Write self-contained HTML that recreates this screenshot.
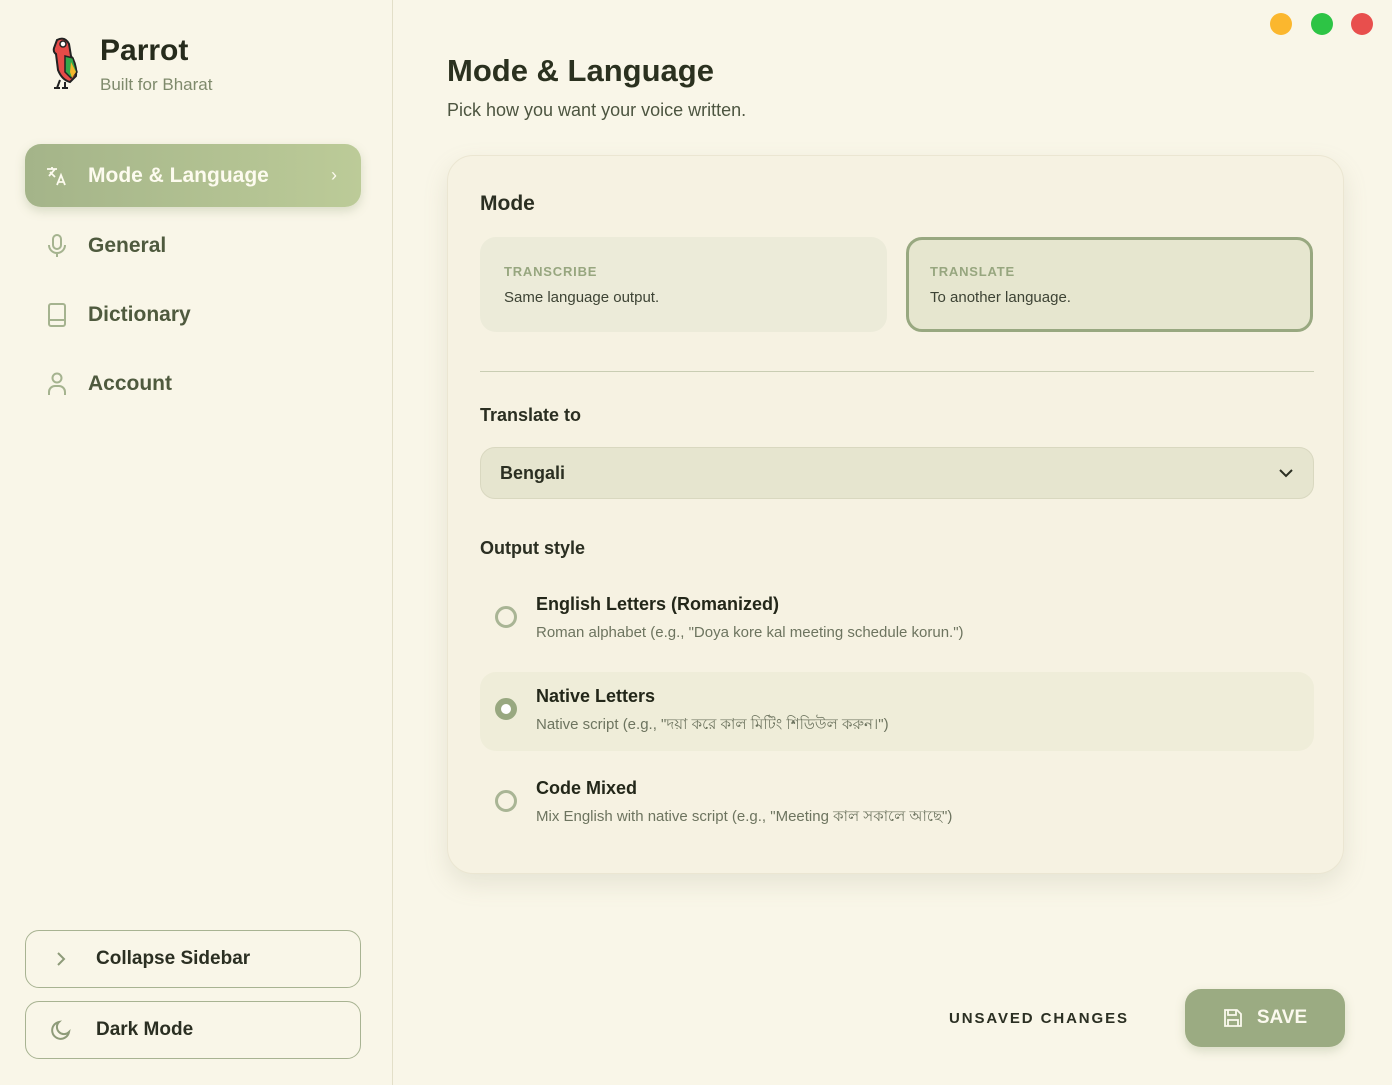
<!DOCTYPE html>
<html><head><meta charset="utf-8"><style>
*{box-sizing:border-box;margin:0;padding:0}
body{width:1392px;height:1085px;background:#f9f6e8;font-family:"Liberation Sans","Noto Sans CJK SC",sans-serif;color:#2b2f22;position:relative;overflow:hidden}
.side{position:absolute;left:0;top:0;width:393px;height:1085px;border-right:1px solid #e3dfc8;background:#f9f6e8}
.brand{position:absolute;left:100px;top:34px;font-size:30px;font-weight:bold;color:#262b1c}
.sub{position:absolute;left:100px;top:75px;font-size:17px;color:#7f8a6c}
.nav{position:absolute;left:25px;width:336px;height:63px;border-radius:16px;display:flex;align-items:center;font-size:21px;font-weight:bold;color:#4f5a3e}
.nav .ic{width:63px;display:flex;justify-content:center}
.nav.act{background:linear-gradient(90deg,#a4b489,#bccb98);color:#fdfbef;box-shadow:0 4px 10px rgba(120,140,90,.25)}
.btm{position:absolute;left:25px;width:336px;height:58px;border:1px solid #a8b392;border-radius:14px;display:flex;align-items:center;font-size:19px;font-weight:bold;color:#2b2f22}
.btm .ic{width:70px;display:flex;justify-content:center}
h1{position:absolute;left:447px;top:53px;font-size:31px;font-weight:bold;color:#2b311f}
.desc{position:absolute;left:447px;top:100px;font-size:18px;color:#4d5540}
.card{position:absolute;left:447px;top:155px;width:897px;height:719px;border:1px solid #ebe6d2;border-radius:26px;background:#f6f2e2;box-shadow:0 10px 24px rgba(150,150,120,.18)}
.lab{position:absolute;left:32px;font-weight:bold;color:#2b2f22}
.m{position:absolute;top:81px;width:407px;height:95px;border-radius:16px;background:#ecebd9;padding:27px 24px}
.m b{display:block;font-size:13px;letter-spacing:.8px;color:#97a67f;margin-bottom:10px}
.m span{font-size:15px;color:#3d4334}
.m.sel{border:3px solid #98a880;background:#e6e6cf;padding:24px 21px}
.sel2{position:absolute;left:32px;top:291px;width:834px;height:52px;border:1px solid #d9d8c0;border-radius:15px;background:#e6e5cf;padding:0 19px;display:flex;align-items:center;justify-content:space-between;font-size:18px;font-weight:bold}
.opt{position:absolute;left:32px;width:834px;height:79px;border-radius:16px}
.opt .r{position:absolute;left:15px;top:26px;width:22px;height:22px;border-radius:50%;border:3px solid #a9b595}
.opt .t{position:absolute;left:56px;top:14px;font-size:18px;font-weight:bold;color:#232719}
.opt .d{position:absolute;left:56px;top:44px;font-size:15px;line-height:18px;color:#6d745f}
.dot{position:absolute;top:13px;width:22px;height:22px;border-radius:50%}
</style></head><body>
<div class="side">
<svg style="position:absolute;left:48px;top:36px" width="32" height="54" viewBox="0 0 32 54">
<path d="M9 4 q8-4 12 4 l2 12 q6 8 5 20 l-6 6 q-8 -2-12-12 l-2-16 q-3-2-2-6 z" fill="#e64b48" stroke="#222" stroke-width="2"/>
<circle cx="15" cy="8" r="3" fill="#fff" stroke="#222" stroke-width="1.5"/>
<path d="M17 20 l8 2 l4 14 l-6 6 l-6-6 z" fill="#33a84a" stroke="#222" stroke-width="1.5"/>
<path d="M23 26 l5 10 l-4 6 l-2-6z" fill="#f4b52c"/>
<path d="M12 44 l-3 8 M17 46 l0 6 M6 52 h6 M14 52 h6" stroke="#222" stroke-width="2"/>
</svg>
<div class="brand">Parrot</div>
<div class="sub">Built for Bharat</div>
<div class="nav act" style="top:144px"><div class="ic"><svg width="24" height="24" viewBox="0 0 24 24" fill="none" stroke="#fdfbef" stroke-width="1.8"><path d="M2 5h10M7 3v2M4 12l6-7M5 8l5 5M12 21l4-10 4 10M13.5 18h5"/></svg></div>Mode &amp; Language<span style="margin-left:auto;margin-right:24px;font-weight:normal;font-size:18px">›</span></div>
<div class="nav" style="top:214px"><div class="ic"><svg width="22" height="26" viewBox="0 0 22 26" fill="none" stroke="#a5b38f" stroke-width="2"><rect x="7" y="2" width="8" height="14" rx="4"/><path d="M3 12a8 8 0 0 0 16 0M11 20v4"/></svg></div>General</div>
<div class="nav" style="top:283px"><div class="ic"><svg width="22" height="26" viewBox="0 0 22 26" fill="none" stroke="#a5b38f" stroke-width="2"><rect x="3" y="2" width="16" height="22" rx="2"/><path d="M3 18h16"/></svg></div>Dictionary</div>
<div class="nav" style="top:352px"><div class="ic"><svg width="22" height="26" viewBox="0 0 22 26" fill="none" stroke="#a5b38f" stroke-width="2"><circle cx="11" cy="7" r="4.5"/><path d="M3 24v-3a6 6 0 0 1 6-6h4a6 6 0 0 1 6 6v3"/></svg></div>Account</div>
<div class="btm" style="top:930px"><div class="ic"><svg width="14" height="18" viewBox="0 0 14 18" fill="none" stroke="#8e9b79" stroke-width="2"><path d="M4 3l6 6-6 6"/></svg></div>Collapse Sidebar</div>
<div class="btm" style="top:1001px"><div class="ic"><svg width="24" height="24" viewBox="0 0 24 24" fill="none" stroke="#8e9b79" stroke-width="2"><path d="M20 14A8.5 8.5 0 1 1 10 4a7 7 0 0 0 10 10z"/></svg></div>Dark Mode</div>
</div>
<div class="dot" style="left:1270px;background:#fbb72e"></div>
<div class="dot" style="left:1311px;background:#2dc445"></div>
<div class="dot" style="left:1351px;background:#e84f4d"></div>
<h1>Mode &amp; Language</h1>
<div class="desc">Pick how you want your voice written.</div>
<div class="card">
<div class="lab" style="top:36px;font-size:21px">Mode</div>
<div class="m" style="left:32px"><b>TRANSCRIBE</b><span>Same language output.</span></div>
<div class="m sel" style="left:458px"><b>TRANSLATE</b><span>To another language.</span></div>
<div style="position:absolute;left:32px;top:215px;width:834px;height:1px;background:#c9cdb3"></div>
<div class="lab" style="top:249px;font-size:18px">Translate to</div>
<div class="sel2">Bengali<svg width="16" height="10" viewBox="0 0 16 10" fill="none" stroke="#2b2f22" stroke-width="2"><path d="M2 2l6 6 6-6"/></svg></div>
<div class="lab" style="top:382px;font-size:18px">Output style</div>
<div class="opt" style="top:424px"><div class="r"></div><div class="t">English Letters (Romanized)</div><div class="d">Roman alphabet (e.g., "Doya kore kal meeting schedule korun.")</div></div>
<div class="opt" style="top:516px;background:#efedd9"><div class="r" style="border:6px solid #98a880;background:#fff"></div><div class="t">Native Letters</div><div class="d">Native script (e.g., "দয়া করে কাল মিটিং শিডিউল করুন।")</div></div>
<div class="opt" style="top:608px"><div class="r"></div><div class="t">Code Mixed</div><div class="d">Mix English with native script (e.g., "Meeting কাল সকালে আছে")</div></div>
</div>
<div style="position:absolute;left:949px;top:1010px;font-size:15px;font-weight:bold;letter-spacing:1.9px;color:#2b2f22">UNSAVED CHANGES</div>
<div style="position:absolute;left:1185px;top:989px;width:160px;height:58px;border-radius:16px;background:#9bab82;box-shadow:0 4px 10px rgba(120,140,90,.25);display:flex;align-items:center;justify-content:center;gap:14px;color:#fbf9ee;font-size:19px;font-weight:bold">
<svg width="20" height="20" viewBox="0 0 20 20" fill="none" stroke="#fbf9ee" stroke-width="1.8"><path d="M2 2h12l4 4v12H2z"/><path d="M5 2v5h8V2M5 18v-6h10v6"/></svg>SAVE</div>
</body></html>
